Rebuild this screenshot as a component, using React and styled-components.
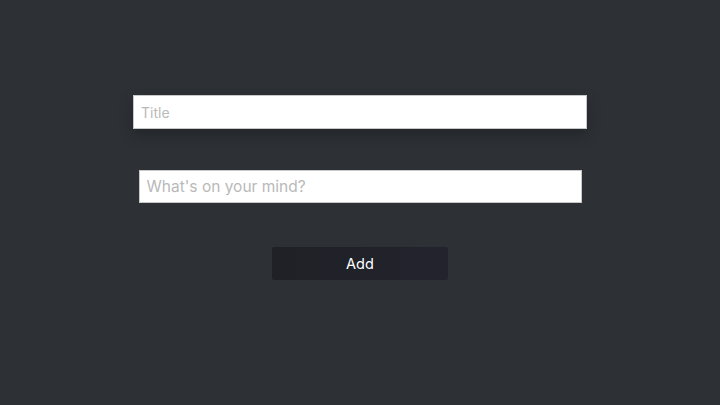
import React, { useState } from 'react'
import styled, { createGlobalStyle } from 'styled-components'

const GlobalStyle = createGlobalStyle`
  html, body {
    margin: 0;
    padding: 0;
    background: #2d3136;
  }
  body {
    font-family: Inter, 'Liberation Sans', sans-serif;
  }
`

const StyledPage = styled.div`
  height: 405px;
  display: flex;
  flex-direction: column;
  align-items: center;
  padding-top: 95px;
  box-sizing: border-box;
`

const StyledForm = styled.form`
  display: flex;
  flex-direction: column;
  align-items: center;
`

const Field = styled.input`
  box-sizing: border-box;
  width: ${(p) => p.w}px;
  height: ${(p) => p.h}px;
  margin-bottom: ${(p) => p.mb}px;
  padding: 0 7px;
  border: 1px solid #c8c8c8;
  background: #fff;
  font-family: inherit;
  font-size: ${(p) => p.fs}px;
  color: #333;
  box-shadow: ${(p) => (p.raised ? '0 6px 14px rgba(0, 0, 0, 0.25)' : 'none')};
  &::placeholder {
    color: #b9b9b9;
  }
  &:focus {
    outline: none;
  }
`

const AddButton = styled.button`
  width: 176px;
  height: 33px;
  border: none;
  border-radius: 2px;
  background: linear-gradient(90deg, #1f2126, #22232d);
  color: #fff;
  font-family: inherit;
  font-size: 14.5px;
  cursor: pointer;
`

const App = () => {
  const [title, setTitle] = useState('')
  const [body, setBody] = useState('')

  return (
    <StyledPage>
      <GlobalStyle />
      <StyledForm onSubmit={(e) => e.preventDefault()}>
        <Field
          w={454}
          h={34}
          mb={41}
          fs={14}
          raised
          placeholder="Title"
          value={title}
          onChange={(e) => setTitle(e.target.value)}
        />
        <Field
          w={443}
          h={33}
          mb={44}
          fs={15.5}
          placeholder="What's on your mind?"
          value={body}
          onChange={(e) => setBody(e.target.value)}
        />
        <AddButton type="submit">Add</AddButton>
      </StyledForm>
    </StyledPage>
  )
}

export default App
